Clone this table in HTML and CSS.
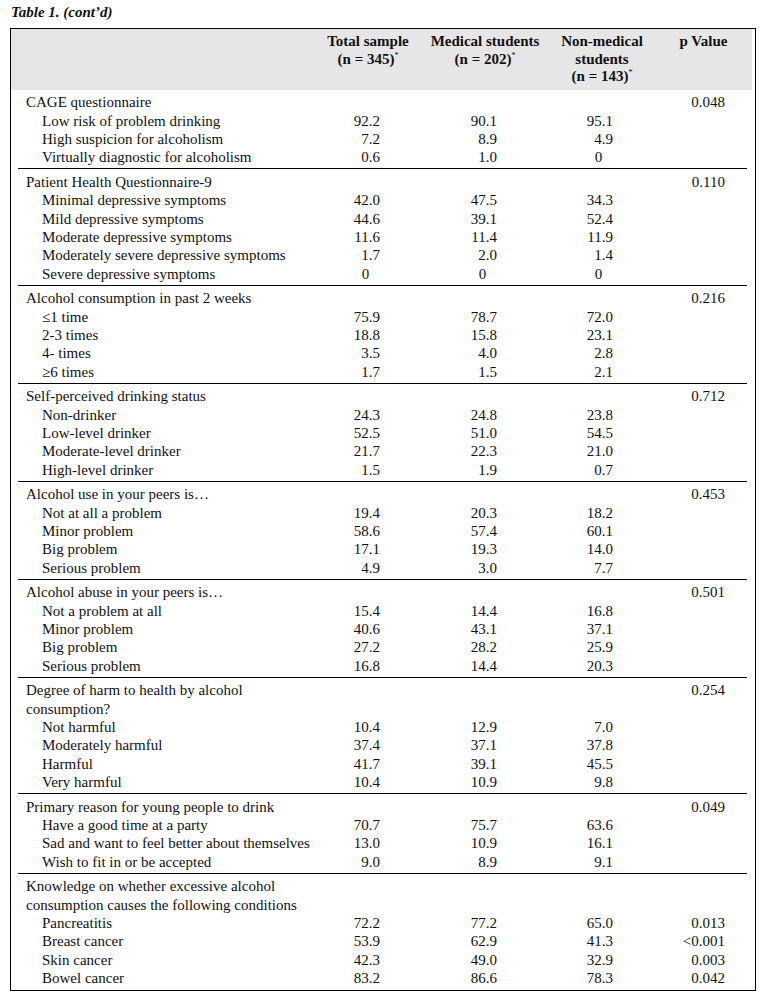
FILE: index.html
```html
<!DOCTYPE html>
<html lang="en">
<head>
<meta charset="utf-8">
<title>Table 1 (cont'd)</title>
<link rel="stylesheet" href="styles.css">
</head>
<body>
<div class="page">
  <div class="caption">Table 1. (cont’d)</div>
  <div class="table">
    <div class="thead">
      <div class="c-lbl"></div>
      <div class="h">Total sample<br>(n = 345)<sup>*</sup></div>
      <div class="h">Medical students<br>(n = 202)<sup>*</sup></div>
      <div class="h">Non-medical<br>students<br>(n = 143)<sup>*</sup></div>
      <div class="h h-p">p Value</div>
    </div>

    <div class="group first">
      <div class="row"><div class="c-lbl g">CAGE questionnaire</div><div class="c-tot"></div><div class="c-med"></div><div class="c-non"></div><div class="c-p">0.048</div></div>
      <div class="row"><div class="c-lbl i">Low risk of problem drinking</div><div class="c-tot">92.2</div><div class="c-med">90.1</div><div class="c-non">95.1</div><div class="c-p"></div></div>
      <div class="row"><div class="c-lbl i">High suspicion for alcoholism</div><div class="c-tot">7.2</div><div class="c-med">8.9</div><div class="c-non">4.9</div><div class="c-p"></div></div>
      <div class="row"><div class="c-lbl i">Virtually diagnostic for alcoholism</div><div class="c-tot">0.6</div><div class="c-med">1.0</div><div class="c-non"><span class="z">0</span></div><div class="c-p"></div></div>
    </div>

    <div class="group">
      <div class="row"><div class="c-lbl g">Patient Health Questionnaire-9</div><div class="c-tot"></div><div class="c-med"></div><div class="c-non"></div><div class="c-p">0.110</div></div>
      <div class="row"><div class="c-lbl i">Minimal depressive symptoms</div><div class="c-tot">42.0</div><div class="c-med">47.5</div><div class="c-non">34.3</div><div class="c-p"></div></div>
      <div class="row"><div class="c-lbl i">Mild depressive symptoms</div><div class="c-tot">44.6</div><div class="c-med">39.1</div><div class="c-non">52.4</div><div class="c-p"></div></div>
      <div class="row"><div class="c-lbl i">Moderate depressive symptoms</div><div class="c-tot">11.6</div><div class="c-med">11.4</div><div class="c-non">11.9</div><div class="c-p"></div></div>
      <div class="row"><div class="c-lbl i">Moderately severe depressive symptoms</div><div class="c-tot">1.7</div><div class="c-med">2.0</div><div class="c-non">1.4</div><div class="c-p"></div></div>
      <div class="row"><div class="c-lbl i">Severe depressive symptoms</div><div class="c-tot"><span class="z">0</span></div><div class="c-med"><span class="z">0</span></div><div class="c-non"><span class="z">0</span></div><div class="c-p"></div></div>
    </div>

    <div class="group">
      <div class="row"><div class="c-lbl g">Alcohol consumption in past 2 weeks</div><div class="c-tot"></div><div class="c-med"></div><div class="c-non"></div><div class="c-p">0.216</div></div>
      <div class="row"><div class="c-lbl i">≤1 time</div><div class="c-tot">75.9</div><div class="c-med">78.7</div><div class="c-non">72.0</div><div class="c-p"></div></div>
      <div class="row"><div class="c-lbl i">2-3 times</div><div class="c-tot">18.8</div><div class="c-med">15.8</div><div class="c-non">23.1</div><div class="c-p"></div></div>
      <div class="row"><div class="c-lbl i">4- times</div><div class="c-tot">3.5</div><div class="c-med">4.0</div><div class="c-non">2.8</div><div class="c-p"></div></div>
      <div class="row"><div class="c-lbl i">≥6 times</div><div class="c-tot">1.7</div><div class="c-med">1.5</div><div class="c-non">2.1</div><div class="c-p"></div></div>
    </div>

    <div class="group">
      <div class="row"><div class="c-lbl g">Self-perceived drinking status</div><div class="c-tot"></div><div class="c-med"></div><div class="c-non"></div><div class="c-p">0.712</div></div>
      <div class="row"><div class="c-lbl i">Non-drinker</div><div class="c-tot">24.3</div><div class="c-med">24.8</div><div class="c-non">23.8</div><div class="c-p"></div></div>
      <div class="row"><div class="c-lbl i">Low-level drinker</div><div class="c-tot">52.5</div><div class="c-med">51.0</div><div class="c-non">54.5</div><div class="c-p"></div></div>
      <div class="row"><div class="c-lbl i">Moderate-level drinker</div><div class="c-tot">21.7</div><div class="c-med">22.3</div><div class="c-non">21.0</div><div class="c-p"></div></div>
      <div class="row"><div class="c-lbl i">High-level drinker</div><div class="c-tot">1.5</div><div class="c-med">1.9</div><div class="c-non">0.7</div><div class="c-p"></div></div>
    </div>

    <div class="group">
      <div class="row"><div class="c-lbl g">Alcohol use in your peers is…</div><div class="c-tot"></div><div class="c-med"></div><div class="c-non"></div><div class="c-p">0.453</div></div>
      <div class="row"><div class="c-lbl i">Not at all a problem</div><div class="c-tot">19.4</div><div class="c-med">20.3</div><div class="c-non">18.2</div><div class="c-p"></div></div>
      <div class="row"><div class="c-lbl i">Minor problem</div><div class="c-tot">58.6</div><div class="c-med">57.4</div><div class="c-non">60.1</div><div class="c-p"></div></div>
      <div class="row"><div class="c-lbl i">Big problem</div><div class="c-tot">17.1</div><div class="c-med">19.3</div><div class="c-non">14.0</div><div class="c-p"></div></div>
      <div class="row"><div class="c-lbl i">Serious problem</div><div class="c-tot">4.9</div><div class="c-med">3.0</div><div class="c-non">7.7</div><div class="c-p"></div></div>
    </div>

    <div class="group">
      <div class="row"><div class="c-lbl g">Alcohol abuse in your peers is…</div><div class="c-tot"></div><div class="c-med"></div><div class="c-non"></div><div class="c-p">0.501</div></div>
      <div class="row"><div class="c-lbl i">Not a problem at all</div><div class="c-tot">15.4</div><div class="c-med">14.4</div><div class="c-non">16.8</div><div class="c-p"></div></div>
      <div class="row"><div class="c-lbl i">Minor problem</div><div class="c-tot">40.6</div><div class="c-med">43.1</div><div class="c-non">37.1</div><div class="c-p"></div></div>
      <div class="row"><div class="c-lbl i">Big problem</div><div class="c-tot">27.2</div><div class="c-med">28.2</div><div class="c-non">25.9</div><div class="c-p"></div></div>
      <div class="row"><div class="c-lbl i">Serious problem</div><div class="c-tot">16.8</div><div class="c-med">14.4</div><div class="c-non">20.3</div><div class="c-p"></div></div>
    </div>

    <div class="group">
      <div class="row"><div class="c-lbl g">Degree of harm to health by alcohol<br>consumption?</div><div class="c-tot"></div><div class="c-med"></div><div class="c-non"></div><div class="c-p">0.254</div></div>
      <div class="row"><div class="c-lbl i">Not harmful</div><div class="c-tot">10.4</div><div class="c-med">12.9</div><div class="c-non">7.0</div><div class="c-p"></div></div>
      <div class="row"><div class="c-lbl i">Moderately harmful</div><div class="c-tot">37.4</div><div class="c-med">37.1</div><div class="c-non">37.8</div><div class="c-p"></div></div>
      <div class="row"><div class="c-lbl i">Harmful</div><div class="c-tot">41.7</div><div class="c-med">39.1</div><div class="c-non">45.5</div><div class="c-p"></div></div>
      <div class="row"><div class="c-lbl i">Very harmful</div><div class="c-tot">10.4</div><div class="c-med">10.9</div><div class="c-non">9.8</div><div class="c-p"></div></div>
    </div>

    <div class="group">
      <div class="row"><div class="c-lbl g">Primary reason for young people to drink</div><div class="c-tot"></div><div class="c-med"></div><div class="c-non"></div><div class="c-p">0.049</div></div>
      <div class="row"><div class="c-lbl i">Have a good time at a party</div><div class="c-tot">70.7</div><div class="c-med">75.7</div><div class="c-non">63.6</div><div class="c-p"></div></div>
      <div class="row"><div class="c-lbl i">Sad and want to feel better about themselves</div><div class="c-tot">13.0</div><div class="c-med">10.9</div><div class="c-non">16.1</div><div class="c-p"></div></div>
      <div class="row"><div class="c-lbl i">Wish to fit in or be accepted</div><div class="c-tot">9.0</div><div class="c-med">8.9</div><div class="c-non">9.1</div><div class="c-p"></div></div>
    </div>

    <div class="group last">
      <div class="row"><div class="c-lbl g">Knowledge on whether excessive alcohol<br>consumption causes the following conditions</div><div class="c-tot"></div><div class="c-med"></div><div class="c-non"></div><div class="c-p"></div></div>
      <div class="row"><div class="c-lbl i">Pancreatitis</div><div class="c-tot">72.2</div><div class="c-med">77.2</div><div class="c-non">65.0</div><div class="c-p">0.013</div></div>
      <div class="row"><div class="c-lbl i">Breast cancer</div><div class="c-tot">53.9</div><div class="c-med">62.9</div><div class="c-non">41.3</div><div class="c-p">&lt;0.001</div></div>
      <div class="row"><div class="c-lbl i">Skin cancer</div><div class="c-tot">42.3</div><div class="c-med">49.0</div><div class="c-non">32.9</div><div class="c-p">0.003</div></div>
      <div class="row"><div class="c-lbl i">Bowel cancer</div><div class="c-tot">83.2</div><div class="c-med">86.6</div><div class="c-non">78.3</div><div class="c-p">0.042</div></div>
    </div>
  </div>
</div>
</body>
</html>
```

FILE: styles.css
```css
html, body {
  margin: 0;
  padding: 0;
  background: #ffffff;
}

body {
  font-family: "Liberation Serif", "Times New Roman", serif;
  font-size: 15px;
  color: #111111;
}

.page {
  padding: 3px 10px 0 10px;
  width: 746px;
}

.caption {
  font-weight: bold;
  font-style: italic;
  font-size: 15px;
  line-height: 18px;
  padding-left: 1px;
  margin-bottom: 7px;
}

.table {
  border: 1px solid #000000;
  width: 744px;
  padding-bottom: 1px;
}

.thead {
  display: grid;
  grid-template-columns: 300px 100px 134px 100px 95px;
  background: #e6e6e6;
  margin-right: 3px;
  padding: 4px 0 4px 7px;
  font-weight: bold;
  line-height: 17.5px;
}

.h {
  text-align: center;
}

.h-p {
  padding-left: 8px;
}

.thead sup {
  font-size: 8px;
  vertical-align: 6px;
  line-height: 0;
  font-weight: normal;
}

.group {
  margin: 0 8px 0 7px;
  padding: 3.7px 0 1.6px 0;
  border-bottom: 1px solid #000000;
}

.group.first {
  padding-top: 3.8px;
}

.group.last {
  border-bottom: none;
}

.row {
  display: grid;
  grid-template-columns: 300px 100px 134px 100px 95px;
  line-height: 18.35px;
  align-items: start;
}

.c-lbl.g {
  padding-left: 8px;
}

.c-lbl.i {
  padding-left: 24px;
}

.c-tot, .c-med, .c-non, .c-p {
  text-align: right;
}

.c-tot {
  padding-right: 38px;
}

.c-med {
  padding-right: 55px;
}

.c-non {
  padding-right: 39px;
}

.c-p {
  padding-right: 22px;
}

.z {
  padding-right: 0.72em;
}
```
